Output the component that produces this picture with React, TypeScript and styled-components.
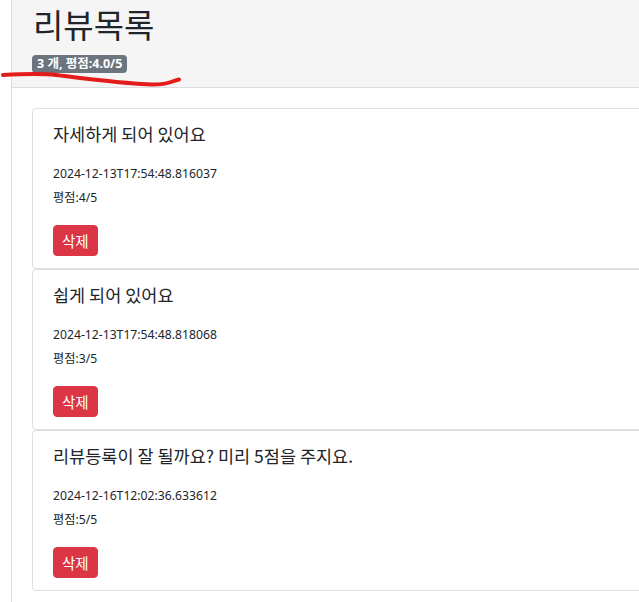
import React from "react";
import styled, { createGlobalStyle } from "styled-components";

const GlobalStyle = createGlobalStyle`
  html, body {
    margin: 0;
    padding: 0;
    overflow: hidden;
    background: #ffffff;
  }
  body {
    font-family: "Noto Sans", "Noto Sans CJK KR", sans-serif;
    color: #212529;
  }
`;

const Page = styled.div`
  position: relative;
  margin-left: 11px;
  border-left: 1px solid #dcdcdc;
  min-height: 602px;
  width: 760px;
`;

const Header = styled.header`
  background: #f5f5f5;
  border-bottom: 1px solid #dcdcdc;
  padding: 5px 0 14px 21px;
`;

const Title = styled.h1`
  margin: 0;
  font-family: "Noto Sans CJK KR", sans-serif;
  font-size: 33px;
  font-weight: 400;
  line-height: 38px;
  color: #212529;
`;

const Badge = styled.span`
  display: inline-block;
  margin-top: 12px;
  margin-left: -1px;
  padding: 0 5px;
  height: 18px;
  line-height: 18px;
  background: #6c757d;
  color: #ffffff;
  font-family: "Noto Sans", "Noto Sans CJK KR", sans-serif;
  font-size: 12.5px;
  font-weight: 700;
  border-radius: 4px;
`;

const Scribble = styled.svg`
  position: absolute;
  left: -11px;
  top: 66px;
  pointer-events: none;
`;

const List = styled.main`
  padding: 20px 0 0 20px;
  display: flex;
  flex-direction: column;
`;

const Card = styled.section`
  border: 1px solid #dfdfdf;
  border-radius: 4px;
  padding: 12px 20px 12px 20px;
  display: flex;
  flex-direction: column;
  align-items: flex-start;
`;

const CardTitle = styled.h5`
  margin: 0 0 16px;
  font-family: "Noto Sans CJK KR", sans-serif;
  font-size: 17.5px;
  font-weight: 400;
  line-height: 25px;
  color: #212529;
`;

const Meta = styled.p`
  margin: 0;
  font-family: "Noto Sans", "Noto Sans CJK KR", sans-serif;
  font-size: 12.2px;
  line-height: 24px;
  color: #212529;
`;

const DeleteButton = styled.button`
  margin-top: 15px;
  height: 31px;
  padding: 0 8px;
  border: 1px solid #dc3545;
  border-radius: 4px;
  background: #dc3545;
  color: #ffffff;
  font-family: "Noto Sans CJK KR", sans-serif;
  font-size: 14.5px;
  line-height: 21px;
  cursor: pointer;
`;

type Review = { text: string; date: string; score: number };

const reviews: Review[] = [
  { text: "자세하게 되어 있어요", date: "2024-12-13T17:54:48.816037", score: 4 },
  { text: "쉽게 되어 있어요", date: "2024-12-13T17:54:48.818068", score: 3 },
  { text: "리뷰등록이 잘 될까요? 미리 5점을 주지요.", date: "2024-12-16T12:02:36.633612", score: 5 },
];

export default function App() {
  const avg = reviews.reduce((s, r) => s + r.score, 0) / reviews.length;
  return (
    <>
      <GlobalStyle />
      <Page>
        <Header>
          <Title>리뷰목록</Title>
          <Badge>
            {reviews.length} 개, 평점:{avg.toFixed(1)}/5
          </Badge>
        </Header>
        <Scribble width="185" height="24" viewBox="0 0 185 24">
          <path
            d="M2 9 C 20 8, 38 7, 55 9 C 80 12, 110 16, 140 18 C 155 19, 165 18, 170 16 C 174 14.5, 176 14, 178 13.5"
            fill="none"
            stroke="#e31b1b"
            strokeWidth="4"
            strokeLinecap="round"
          />
        </Scribble>
        <List>
          {reviews.map((r) => (
            <Card key={r.date}>
              <CardTitle>{r.text}</CardTitle>
              <Meta>{r.date}</Meta>
              <Meta>평점:{r.score}/5</Meta>
              <DeleteButton>삭제</DeleteButton>
            </Card>
          ))}
        </List>
      </Page>
    </>
  );
}
